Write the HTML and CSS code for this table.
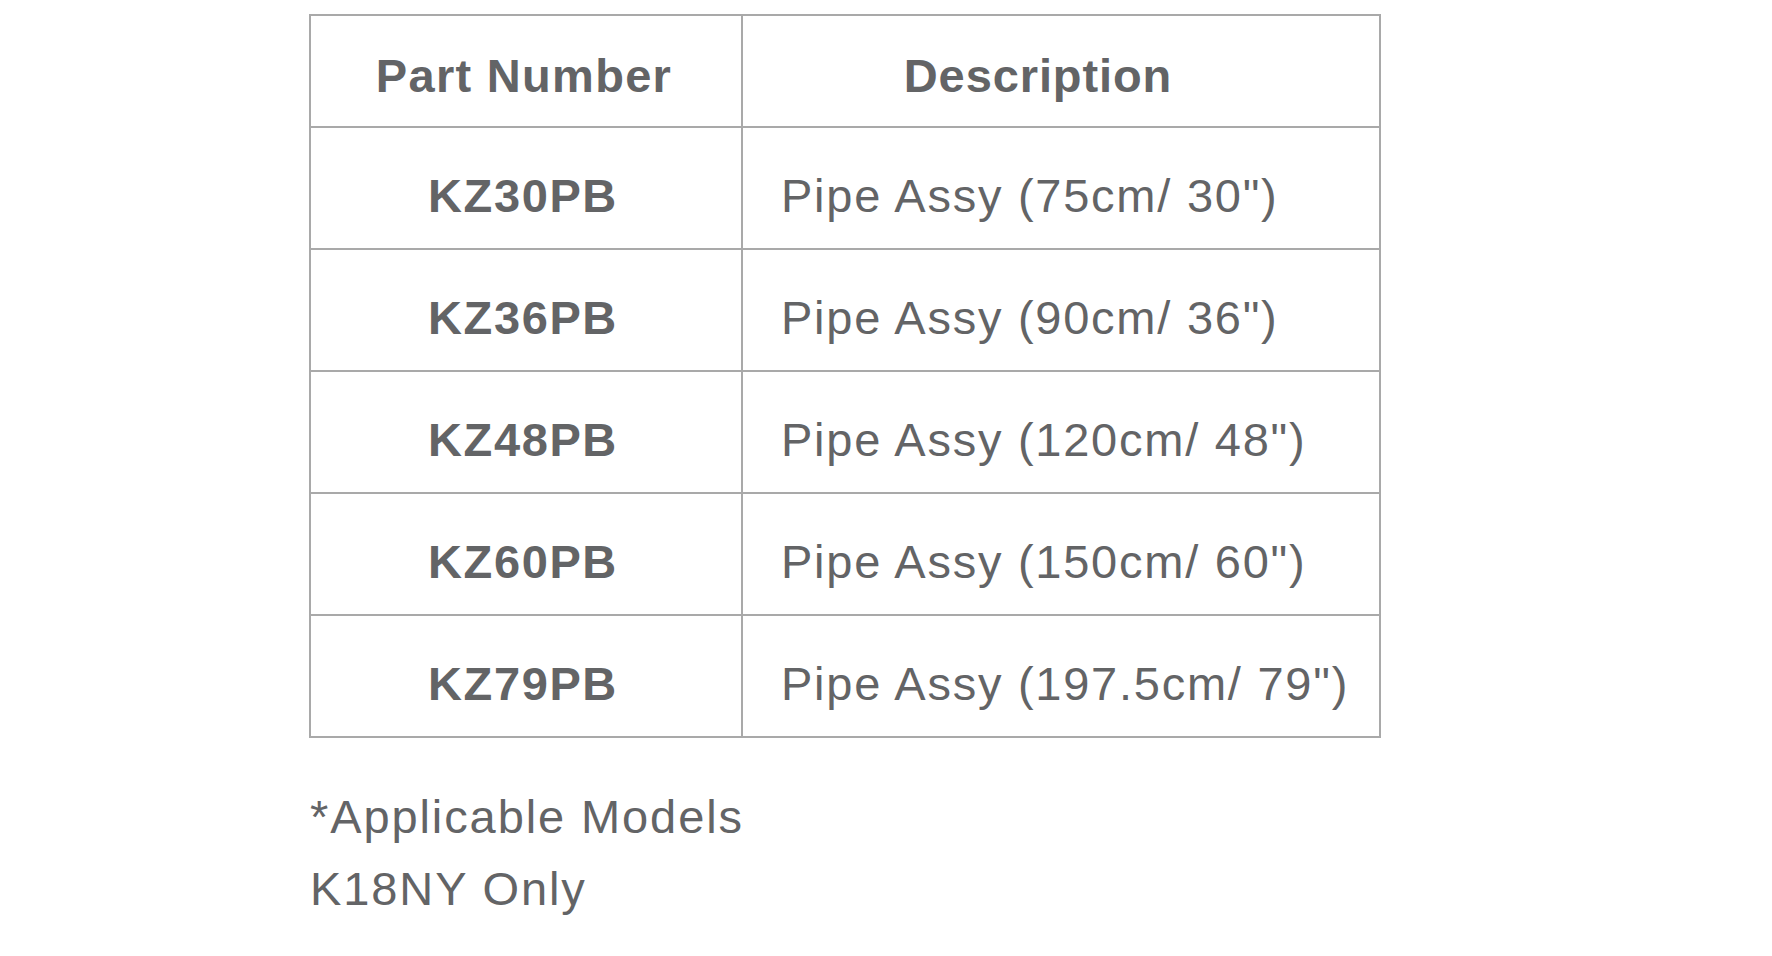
FILE: index.html
```html
<!DOCTYPE html>
<html lang="en">
<head>
<meta charset="utf-8">
<title>Pipe Assy Parts</title>
<link rel="stylesheet" href="styles.css">
</head>
<body>
<main class="page">
  <table class="parts">
    <thead>
      <tr class="head-row">
        <th class="col-part">Part Number</th>
        <th class="col-desc">Description</th>
      </tr>
    </thead>
    <tbody>
      <tr><td class="part">KZ30PB</td><td class="desc">Pipe Assy (75cm/ 30")</td></tr>
      <tr><td class="part">KZ36PB</td><td class="desc">Pipe Assy (90cm/ 36")</td></tr>
      <tr><td class="part">KZ48PB</td><td class="desc">Pipe Assy (120cm/ 48")</td></tr>
      <tr><td class="part">KZ60PB</td><td class="desc">Pipe Assy (150cm/ 60")</td></tr>
      <tr><td class="part">KZ79PB</td><td class="desc">Pipe Assy (197.5cm/ 79")</td></tr>
    </tbody>
  </table>
  <p class="note">*Applicable Models<br>K18NY Only</p>
</main>
</body>
</html>
```

FILE: styles.css
```css
html, body {
  margin: 0;
  padding: 0;
  background: #ffffff;
}

.page {
  padding: 14px 0 0 309px;
  font-family: "Liberation Sans", Arial, Helvetica, sans-serif;
  color: #636466;
}

.parts {
  border-collapse: collapse;
  width: 1072px;
  table-layout: fixed;
  font-size: 47px;
  line-height: 1.15;
}

.parts th,
.parts td {
  border: 2px solid #a9a9a9;
  vertical-align: middle;
  padding: 0;
}

.head-row { height: 112px; }
.parts tbody tr { height: 122px; }

.parts th {
  font-weight: bold;
  letter-spacing: 1.3px;
  padding-top: 10px;
  text-align: center;
}

.parts th.col-part {
  width: 426px;
  padding-right: 4px;
}

.parts th.col-desc {
  padding-right: 46px;
  letter-spacing: 0.9px;
}

.part {
  font-weight: bold;
  letter-spacing: 1.6px;
  text-align: center;
  padding-top: 17px !important;
  padding-right: 6px !important;
}

.desc {
  letter-spacing: 1.75px;
  text-align: left;
  padding-left: 38px !important;
  padding-top: 17px !important;
}

.note {
  margin: 43px 0 0 1px;
  font-size: 47px;
  line-height: 72px;
  letter-spacing: 1.9px;
}
```
